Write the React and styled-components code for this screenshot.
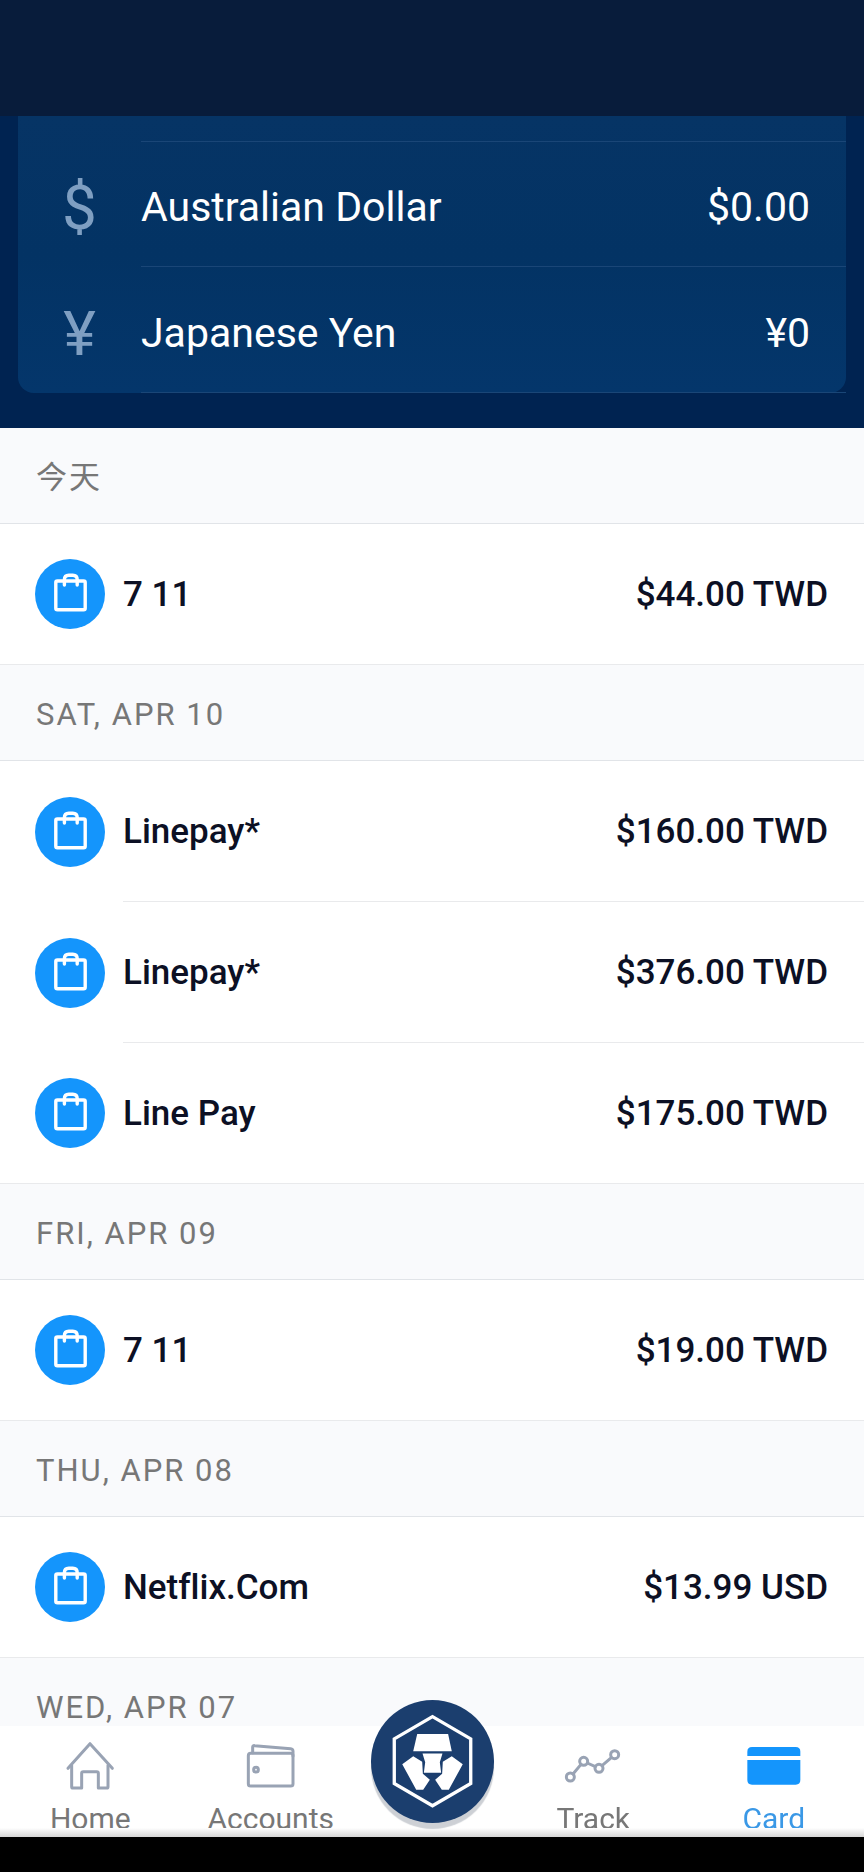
import React from "react";
import styled, { createGlobalStyle } from "styled-components";

const GlobalStyle = createGlobalStyle`
  * {
    box-sizing: border-box;
  }
  body {
    margin: 0;
    background: #000000;
    font-family: Roboto, "Noto Sans CJK TC", sans-serif;
    font-variant-ligatures: none;
  }
  h2, ul, p {
    margin: 0;
    padding: 0;
    font-weight: 400;
    list-style: none;
  }
`;

const Screen = styled.div`
  display: flex;
  flex-direction: column;
  height: 100vh;
`;

const StatusBar = styled.header`
  flex: none;
  height: 116px;
  background: #081c3b;
`;

const Feed = styled.main`
  flex: 1;
  min-height: 0;
  overflow-y: auto;
  scrollbar-width: none;
  background: #ffffff;
`;

const Wallet = styled.section`
  padding: 0 18px 35px;
  background: #002351;
`;

const WalletCard = styled.ul`
  padding-top: 25px;
  border-radius: 0 0 16px 16px;
  background: linear-gradient(#063465, #033364 50%, #04366b);
`;

const WalletRow = styled.li`
  display: grid;
  grid-template-columns: 123px 1fr;
  height: 126px;
`;

const Symbol = styled.span`
  align-self: center;
  padding-top: 8px;
  text-align: center;
  font-size: 62px;
  line-height: 60px;
  color: #7f9fc2;
`;

const WalletBody = styled.div`
  display: flex;
  align-items: center;
  justify-content: space-between;
  padding: 6px 36px 0 0;
  border-top: ${(props) => (props.$first ? "1px solid #1a4677" : "none")};
  border-bottom: 1px solid #1a4677;
  font-size: 41px;
  line-height: 48px;
  color: #ffffff;
`;

const DayTitle = styled.h2`
  display: flex;
  align-items: center;
  height: 96px;
  padding: 4px 36px 0;
  border-bottom: 1px solid #e1e4e8;
  background: #f9fafc;
  font-size: 31px;
  line-height: 36px;
  letter-spacing: 2px;
  color: #777777;
`;

const Transaction = styled.li`
  display: flex;
  align-items: stretch;
  height: 141px;
  padding-left: 35px;
  gap: 18px;
  background: #ffffff;
  &:last-child {
    border-bottom: 1px solid #e9eaec;
  }
`;

const Badge = styled.span`
  flex: none;
  align-self: center;
  display: flex;
  width: 70px;
  height: 70px;
  border-radius: 50%;
  background: #1495fc;
`;

const TransactionBody = styled.div`
  flex: 1;
  display: flex;
  align-items: center;
  justify-content: space-between;
  padding: 2px 36px 0 0;
  font-size: 35px;
  line-height: 40px;
  font-weight: 500;
  color: #0c1024;
  ${Transaction}:not(:last-child) > & {
    border-bottom: 1px solid #e9eaec;
  }
`;

const TabBar = styled.nav`
  position: relative;
  z-index: 1;
  flex: none;
  display: grid;
  grid-template-columns: 1fr 1fr 142px 1fr 1fr;
  height: 111px;
  background: linear-gradient(#ffffff calc(100% - 9px), #d6d6d6);
`;

const Tab = styled.a`
  display: flex;
  flex-direction: column;
  align-items: center;
  gap: 8px;
  height: 102px;
  padding-top: 13px;
  overflow: hidden;
  font-size: 30px;
  line-height: 36px;
  text-decoration: none;
  color: ${(props) => (props.$active ? "#3a98e6" : "#777777")};
  svg {
    flex: none;
    width: 60px;
    height: 54px;
  }
`;

const MenuButton = styled.button`
  justify-self: center;
  width: 123px;
  height: 123px;
  margin-top: -26px;
  padding: 0;
  border: none;
  border-radius: 50%;
  background: #1b3e6e;
  box-shadow: 0 6px 1px #cdd0d5;
  svg {
    display: block;
    width: 100%;
    height: 100%;
  }
`;

const GestureBar = styled.footer`
  flex: none;
  height: 35px;
  background: #000000;
`;

const line = {
  fill: "none",
  stroke: "#99a3b4",
  strokeWidth: 9,
  strokeLinecap: "round",
  strokeLinejoin: "round",
};

const BagIcon = () => (
  <svg viewBox="0 0 70 70" fill="none" stroke="#ffffff" strokeWidth="3.4" aria-hidden="true">
    <rect x="20.8" y="22" width="29.4" height="28.8" rx="1.6" />
    <path d="M29.4 26v-5.4q0-4.4 4.4-4.4h4q4.4 0 4.4 4.4v5.4" strokeLinecap="round" />
  </svg>
);

const HomeIcon = () => (
  <svg viewBox="180 147 180 162" aria-hidden="true" {...line}>
    <path d="M204 235 270 161l67 74" />
    <path d="M215 226v64q0 4 4 4h26v-44q0-5 5-5h40q5 0 5 5v44h25q4 0 4-4v-64" />
  </svg>
);

const AccountsIcon = () => (
  <svg viewBox="723 147 180 162" aria-hidden="true" {...line}>
    <rect x="745" y="190" width="134" height="98" rx="7" />
    <path d="M758 188v-16q0-6 6-5l108 9q7 1 7 8v14" />
    <circle cx="768" cy="239" r="7" />
  </svg>
);

const TrackIcon = () => (
  <svg viewBox="159 147 180 162" aria-hidden="true" {...line}>
    <path d="m189 252 24-29M232 219l24 11M276 227l28-24" />
    <circle cx="181" cy="261" r="12" />
    <circle cx="221" cy="214" r="12" />
    <circle cx="267" cy="235" r="12" />
    <circle cx="314" cy="194" r="12" />
  </svg>
);

const CardIcon = () => (
  <svg viewBox="700 147 180 162" fill="#1495fc" aria-hidden="true">
    <path d="M710 198v-13q0-14 14-14h131q14 0 14 14v13z" />
    <path d="M710 210h159v60q0 14-14 14H724q-14 0-14-14z" />
  </svg>
);

const LogoIcon = () => (
  <svg viewBox="61 60 370 370" fill="#ffffff" aria-hidden="true">
    <path
      d="M246 110 361 177v134l-115 67-115-67V177z"
      fill="none"
      stroke="#ffffff"
      strokeWidth="10"
    />
    <path d="M200 162h93l11 52H188z" />
    <path d="M216 221h60l-8 26 4 32h-52l4-32z" />
    <path d="M188 229l27 17 2 36 21 18-20 30h-21l-42-77z" />
    <path d="M304 229l-27 17-2 36-21 18 20 30h21l42-77z" />
  </svg>
);

const balances = [
  { symbol: "$", name: "Australian Dollar", amount: "$0.00" },
  { symbol: "¥", name: "Japanese Yen", amount: "¥0" },
];

const days = [
  { title: "今天", items: [["7 11", "$44.00 TWD"]] },
  {
    title: "SAT, APR 10",
    items: [
      ["Linepay*", "$160.00 TWD"],
      ["Linepay*", "$376.00 TWD"],
      ["Line Pay", "$175.00 TWD"],
    ],
  },
  { title: "FRI, APR 09", items: [["7 11", "$19.00 TWD"]] },
  { title: "THU, APR 08", items: [["Netflix.Com", "$13.99 USD"]] },
  { title: "WED, APR 07", items: [] },
];

function App() {
  return (
    <Screen>
      <GlobalStyle />
      <StatusBar />
      <Feed>
        <Wallet>
          <WalletCard>
            {balances.map((b, i) => (
              <WalletRow key={b.name}>
                <Symbol>{b.symbol}</Symbol>
                <WalletBody $first={i === 0}>
                  <span>{b.name}</span>
                  <span>{b.amount}</span>
                </WalletBody>
              </WalletRow>
            ))}
          </WalletCard>
        </Wallet>
        {days.map((day) => (
          <section key={day.title}>
            <DayTitle>{day.title}</DayTitle>
            <ul>
              {day.items.map(([name, amount], i) => (
                <Transaction key={i}>
                  <Badge>
                    <BagIcon />
                  </Badge>
                  <TransactionBody>
                    <span>{name}</span>
                    <span>{amount}</span>
                  </TransactionBody>
                </Transaction>
              ))}
            </ul>
          </section>
        ))}
      </Feed>
      <TabBar>
        <Tab href="#home">
          <HomeIcon />
          Home
        </Tab>
        <Tab href="#accounts">
          <AccountsIcon />
          Accounts
        </Tab>
        <MenuButton aria-label="Menu">
          <LogoIcon />
        </MenuButton>
        <Tab href="#track">
          <TrackIcon />
          Track
        </Tab>
        <Tab href="#card" $active>
          <CardIcon />
          Card
        </Tab>
      </TabBar>
      <GestureBar />
    </Screen>
  );
}

export default App;
